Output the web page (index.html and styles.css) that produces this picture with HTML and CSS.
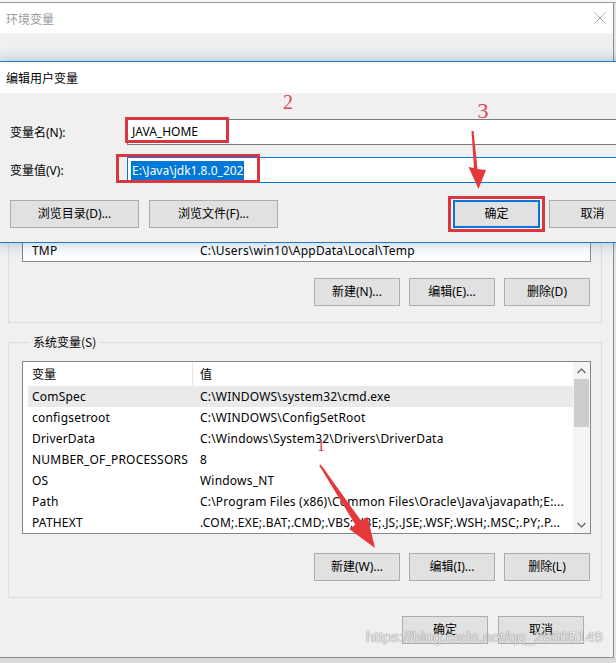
FILE: index.html
```html
<!DOCTYPE html>
<html lang="zh-CN">
<head>
<meta charset="utf-8">
<title>环境变量</title>
<link rel="stylesheet" href="styles.css">
</head>
<body>
<div class="desk-top"></div>
<div class="env">
  <div class="env-title">
    <span class="title-text">环境变量</span>
    <svg class="close" width="12" height="12" viewBox="0 0 12 12"><path d="M0.5 0.5 L11.5 11.5 M11.5 0.5 L0.5 11.5" stroke="#a8a8a8" stroke-width="1" fill="none"/></svg>
  </div>
  <div class="env-body">
    <div class="group group-user">
      <div class="listbox lb-user">
        <div class="lb-content">
          <div class="lb-row"><span class="c1">TMP</span><span class="c2">C:\Users\win10\AppData\Local\Temp</span></div>
        </div>
      </div>
      <div class="btn-row">
        <button class="btn">新建(N)...</button>
        <button class="btn">编辑(E)...</button>
        <button class="btn">删除(D)</button>
      </div>
    </div>
    <fieldset class="group group-sys">
      <legend>系统变量(S)</legend>
      <div class="listbox lb-sys">
        <div class="lb-content">
          <div class="lb-head"><span class="h1">变量</span><span class="h2">值</span></div>
          <div class="lb-row hl"><span class="c1">ComSpec</span><span class="c2">C:\WINDOWS\system32\cmd.exe</span></div>
          <div class="lb-row"><span class="c1">configsetroot</span><span class="c2">C:\WINDOWS\ConfigSetRoot</span></div>
          <div class="lb-row"><span class="c1">DriverData</span><span class="c2">C:\Windows\System32\Drivers\DriverData</span></div>
          <div class="lb-row"><span class="c1">NUMBER_OF_PROCESSORS</span><span class="c2">8</span></div>
          <div class="lb-row"><span class="c1">OS</span><span class="c2">Windows_NT</span></div>
          <div class="lb-row"><span class="c1">Path</span><span class="c2">C:\Program Files (x86)\Common Files\Oracle\Java\javapath;E:...</span></div>
          <div class="lb-row"><span class="c1">PATHEXT</span><span class="c2">.COM;.EXE;.BAT;.CMD;.VBS;.VBE;.JS;.JSE;.WSF;.WSH;.MSC;.PY;.P...</span></div>
        </div>
        <div class="scrollbar">
          <div class="sb-btn"><svg width="9" height="6" viewBox="0 0 9 6"><path d="M0.5 5 L4.5 1 L8.5 5" stroke="#606060" stroke-width="1.2" fill="none"/></svg></div>
          <div class="sb-track"><div class="sb-thumb"></div></div>
          <div class="sb-btn"><svg width="9" height="6" viewBox="0 0 9 6"><path d="M0.5 1 L4.5 5 L8.5 1" stroke="#606060" stroke-width="1.2" fill="none"/></svg></div>
        </div>
      </div>
      <div class="btn-row">
        <button class="btn">新建(W)...</button>
        <button class="btn">编辑(I)...</button>
        <button class="btn">删除(L)</button>
      </div>
    </fieldset>
    <div class="btn-row bottom-row">
      <button class="btn">确定</button>
      <button class="btn">取消</button>
    </div>
  </div>
</div>
<div class="desk-bottom"></div>

<div class="dialog">
  <div class="dlg-title">编辑用户变量</div>
  <div class="dlg-body">
    <div class="form">
      <label class="lbl">变量名(N):</label>
      <div class="input">JAVA_HOME</div>
      <label class="lbl">变量值(V):</label>
      <div class="input focused"><span class="sel">E:\Java\jdk1.8.0_202</span></div>
    </div>
    <div class="dlg-buttons">
      <div class="left-btns">
        <button class="btn wide">浏览目录(D)...</button>
        <button class="btn wide">浏览文件(F)...</button>
      </div>
      <div class="right-btns">
        <button class="btn dlg-btn default">确定</button>
        <button class="btn dlg-btn">取消</button>
      </div>
    </div>
  </div>
</div>

<svg class="annot" width="616" height="663" viewBox="0 0 616 663">
  <rect x="126.5" y="118.5" width="101" height="23" fill="none" stroke="#d9373f" stroke-width="3"/>
  <rect x="117.5" y="155.5" width="141" height="26" fill="none" stroke="#d9373f" stroke-width="3"/>
  <rect x="449.5" y="197.5" width="94" height="33" fill="none" stroke="#d9373f" stroke-width="3"/>
  <polygon points="471.5,131 473.5,131 477.5,169 486,170 478.5,189 468.5,167 474,168" fill="#e5383b"/>
  <polygon points="320.8,464.4 361.3,521.1 367.6,516.9 375,548 349.2,529.1 355.5,524.9 319.2,465.6" fill="#e5383b"/>
  <text class="num" x="288" y="109" font-size="20">2</text>
  <text class="num" x="483" y="118" font-size="22">3</text>
  <text class="num" x="321" y="451" font-size="17">1</text>
</svg>

<div class="watermark">https://blog.csdn.net/qq_28605149</div>
</body>
</html>
```

FILE: styles.css
```css
* { box-sizing: border-box; }

html, body {
  margin: 0;
  padding: 0;
}

body {
  width: 616px;
  height: 663px;
  overflow: hidden;
  position: relative;
  background: #e6e6e6;
  font-family: "Noto Sans", "Noto Sans CJK SC", sans-serif;
  font-size: 12px;
  color: #000;
}

.desk-top {
  height: 3px;
  background: #f7f7f7;
  border-bottom: 1px solid #9a9a9a;
}

.env {
  width: 614px;
  background: #f0f0f0;
  border-right: 1px solid #8c8c8c;
  border-bottom: 1px solid #8c8c8c;
}

.env-title {
  height: 30px;
  background: #fff;
  display: flex;
  align-items: center;
  justify-content: space-between;
  padding: 0 7px 0 6px;
  color: #9b9b9b;
  font-family: "Noto Sans CJK SC", sans-serif;
}

.close { display: block; }

.env-body {
  padding: 58px 11px 13px 8px;
}

.group {
  margin: 0;
  min-width: 0;
  border: 1px solid #dcdcdc;
  padding: 0 10px 16px 13px;
}

.group legend {
  margin-left: 8px;
  padding: 0 3px;
  line-height: 16px;
  height: 16px;
  font-family: "Noto Sans CJK SC", sans-serif;
  font-size: 12px;
}

.group-sys { margin-top: 11px; }

.listbox {
  margin-top: 11px;
  border: 1px solid #828790;
  background: #fff;
  display: flex;
}

.lb-user {
  height: 159px;
  align-items: flex-end;
}

.lb-content {
  flex: 1;
  min-width: 0;
}

.lb-head {
  display: flex;
  height: 24px;
  line-height: 24px;
}

.lb-head .h1 {
  width: 170px;
  padding-left: 9px;
  border-right: 1px solid #e5e5e5;
  font-family: "Noto Sans CJK SC", sans-serif;
}

.lb-head .h2 {
  padding-left: 7px;
  font-family: "Noto Sans CJK SC", sans-serif;
}

.lb-row {
  display: flex;
  height: 21px;
  line-height: 21px;
  margin-left: 5px;
  padding-left: 4px;
  white-space: nowrap;
  overflow: hidden;
  letter-spacing: 0.2px;
}

.lb-row.hl { background: #eaeaea; }

.lb-row .c1 { width: 168px; flex: none; overflow: hidden; }
.lb-row .c2 { overflow: hidden; }

.scrollbar {
  width: 17px;
  background: #f4f4f4;
  display: flex;
  flex-direction: column;
}

.sb-btn {
  height: 17px;
  display: flex;
  align-items: center;
  justify-content: center;
}

.sb-btn svg { display: block; }

.sb-track { flex: 1; padding: 0 1px; }

.sb-thumb {
  height: 48px;
  background: #cdcdcd;
}

.btn-row {
  display: flex;
  justify-content: flex-end;
  gap: 9px;
  margin-top: 16px;
  padding-right: 1px;
}

.group-sys .btn-row { margin-top: 19px; }

.bottom-row {
  margin-top: 18px;
  gap: 10px;
  padding-right: 18px;
}

.btn {
  width: 86px;
  height: 28px;
  margin: 0;
  padding: 0;
  background: #e1e1e1;
  border: 1px solid #adadad;
  border-radius: 0;
  font-family: "Noto Sans", "Noto Sans CJK SC", sans-serif;
  font-size: 12px;
  color: #000;
  line-height: 26px;
  text-align: center;
}

/* Dialog overlay window */
.dialog {
  position: absolute;
  left: -1px;
  top: 61px;
  width: 650px;
  border: 1px solid #1e7dc2;
  background: #f0f0f0;
  box-shadow: 0 0 12px 2px rgba(40, 90, 130, 0.28);
}

.dlg-title {
  height: 31px;
  line-height: 31px;
  background: #fff;
  padding-left: 6px;
  font-family: "Noto Sans CJK SC", sans-serif;
}

.dlg-body {
  padding: 26px 12px 14px 10px;
}

.form {
  display: grid;
  grid-template-columns: 117px 1fr;
  row-gap: 12px;
  align-items: center;
}

.lbl {
  font-family: "Noto Sans", "Noto Sans CJK SC", sans-serif;
}

.input {
  height: 26px;
  background: #fff;
  border: 1px solid #7a7a7a;
  padding-left: 4px;
  line-height: 24px;
  white-space: nowrap;
}

.input.focused {
  border-color: #0078d7;
  padding-left: 3px;
}

.sel {
  display: inline-block;
  background: #0078d7;
  color: #fff;
  line-height: 20px;
  padding: 0 1px;
  vertical-align: middle;
}

.dlg-buttons {
  display: flex;
  justify-content: space-between;
  margin-top: 17px;
}

.left-btns, .right-btns {
  display: flex;
  gap: 10px;
}

.right-btns { gap: 9px; }

.btn.wide { width: 129px; }
.btn.dlg-btn { width: 87px; }

.btn.default {
  border: 2px solid #0078d7;
  line-height: 24px;
}

/* Annotations */
.annot {
  position: absolute;
  left: 0;
  top: 0;
  pointer-events: none;
}

.annot .num {
  font-family: "Liberation Serif", serif;
  fill: #d94750;
  text-anchor: middle;
}

.desk-bottom {
  height: 5px;
  background: #dadada;
}

.watermark {
  position: absolute;
  left: 366px;
  top: 628px;
  font-family: "Liberation Sans", sans-serif;
  font-size: 15px;
  color: rgba(255, 255, 255, 0.85);
  text-shadow: 0 0 1px rgba(100, 100, 100, 0.8), 0 0 1px rgba(100, 100, 100, 0.6);
  letter-spacing: 0.2px;
  white-space: nowrap;
  pointer-events: none;
}
```
